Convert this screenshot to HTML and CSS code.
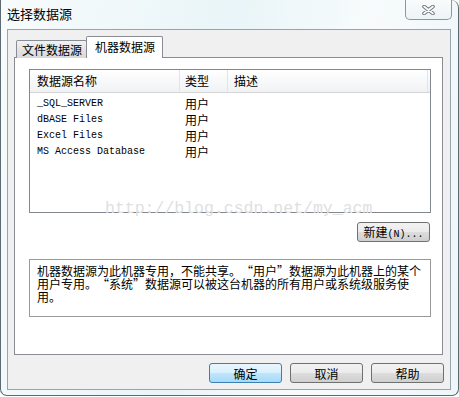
FILE: index.html
```html
<!DOCTYPE html>
<html lang="zh-CN">
    <head>
        <meta charset="UTF-8" />
        <title>选择数据源</title>
        <link rel="stylesheet" href="styles.css">
    </head>
    <body>
        <div class="window">
            <div class="titlebar">
                <span class="title">选择数据源</span>
                <button class="close" aria-label="关闭">
                    <svg width="13" height="10" viewBox="0 0 13 10">
                        <path d="M2 1.5 L11 8.5 M11 1.5 L2 8.5" stroke="#6f7a80" stroke-width="3.6" stroke-linecap="round"></path>
                        <path d="M2 1.5 L11 8.5 M11 1.5 L2 8.5" stroke="#fff" stroke-width="1.6" stroke-linecap="round"></path>
                    </svg>
                </button>
            </div>
            <div class="client">
                <div class="tabs">
                    <div class="tab">文件数据源</div>
                    <div class="tab selected">机器数据源</div>
                </div>
                <div class="panel">
                    <div class="list">
                        <div class="list-head">
                            <div class="col name">数据源名称</div>
                            <div class="col type">类型</div>
                            <div class="col desc">描述</div>
                        </div>
                        <div class="rows">
                            <div class="row"><span class="col name mono">_SQL_SERVER</span><span class="col type">用户</span></div>
                            <div class="row"><span class="col name mono">dBASE Files</span><span class="col type">用户</span></div>
                            <div class="row"><span class="col name mono">Excel Files</span><span class="col type">用户</span></div>
                            <div class="row"><span class="col name mono">MS Access Database</span><span class="col type">用户</span></div>
                        </div>
                    </div>
                    <div class="watermark">http://blog.csdn.net/my_acm</div>
                    <div class="new-row">
                        <button class="btn new">新建<span class="mono">(N)...</span></button>
                    </div>
                    <div class="note">机器数据源为此机器专用，不能共享。<span class="q-open">“</span>用户<span class="q-close">”</span>数据源为此机器上的某个用户专用。<span class="q-open">“</span>系统<span class="q-close">”</span>数据源可以被这台机器的所有用户或系统级服务使用。</div>
                </div>
                <div class="actions">
                    <button class="btn default">确定</button>
                    <button class="btn">取消</button>
                    <button class="btn">帮助</button>
                </div>
            </div>
        </div>
    </body>
</html>
```

FILE: styles.css
```css
*,
*::before,
*::after {
    box-sizing: border-box;
}

body {
    margin: 0;
    background: #fff;
    font-family: "Noto Sans CJK SC", sans-serif;
    font-size: 12px;
    color: #000;
}

.mono {
    font-family: "Liberation Mono", "Noto Sans CJK SC", monospace;
    font-size: 10px;
}

.window {
    position: relative;
    width: 459px;
    height: 396px;
    border: 1px solid #5d6a72;
    border-top: 0;
    border-radius: 0 8px 7px 7px;
    background: linear-gradient(100deg, #f7fbfc 0%, #e9f5f8 45%, #f7fbfc 70%, #eef6f9 100%);
    display: flex;
    flex-direction: column;
}

.titlebar {
    height: 29px;
    flex: none;
    display: flex;
    align-items: center;
    padding: 0 0 1px 6px;
}
.title {
    font-size: 13px;
    line-height: 16px;
}
.close {
    position: absolute;
    top: 0;
    right: 6px;
    width: 47px;
    height: 20px;
    border: 1px solid #8b979e;
    border-top: 0;
    border-radius: 0 0 5px 5px;
    background: linear-gradient(#f9fbfc, #eef3f5);
    padding: 0;
    display: flex;
    align-items: center;
    justify-content: center;
}

.client {
    flex: 1;
    margin: 0 7px 5px 6px;
    border: 1px solid #96a4ad;
    background: #f0f0f0;
    display: flex;
    flex-direction: column;
}

.tabs {
    display: flex;
    align-items: flex-end;
    margin: 6px 0 0 8px;
    height: 22px;
    position: relative;
    z-index: 1;
}
.tab {
    height: 18px;
    width: 71px;
    border: 1px solid #898c95;
    border-bottom: 0;
    border-radius: 2px 2px 0 0;
    background: linear-gradient(#f2f2f2, #e3e3e3 50%, #d9d9d9);
    padding-left: 5px;
    line-height: 17px;
}
.tab.selected {
    height: 22px;
    width: 77px;
    margin-left: -1px;
    background: #fff;
    padding-left: 8px;
    line-height: 20px;
}

.panel {
    position: relative;
    height: 298px;
    margin: -1px 7px 0 6px;
    border: 1px solid #898c95;
    background: #fff;
    padding: 11px 11px 0 14px;
}

.list {
    height: 144px;
    border: 1px solid #828790;
}
.list-head {
    display: flex;
    height: 23px;
    border-bottom: 1px solid #d5d5d5;
    background: linear-gradient(#ffffff, #f7f8f9 50%, #f1f2f4);
    line-height: 22px;
}
.list-head .col {
    border-right: 1px solid #e3e4e6;
}
.col.name {
    width: 150px;
    padding-left: 7px;
}
.col.type {
    width: 48px;
    padding-left: 5px;
}
.col.desc {
    width: 200px;
    padding-left: 6px;
}
.rows {
    padding-top: 3px;
}
.row {
    display: flex;
    height: 16px;
    line-height: 16px;
}
.row .col.name {
    font-size: 10px;
}

.watermark {
    position: absolute;
    left: 90px;
    top: 142px;
    font-family: "Liberation Mono", monospace;
    font-size: 16.5px;
    line-height: 18px;
    color: #e0e0e0;
    pointer-events: none;
}

.new-row {
    display: flex;
    justify-content: flex-end;
    margin: 9px 1px 0 0;
}

.btn {
    width: 73px;
    height: 20px;
    padding: 0;
    border: 1px solid #707070;
    border-radius: 3px;
    background: linear-gradient(#f2f2f2, #ebebeb 50%, #dddddd 51%, #cfcfcf);
    font-family: "Noto Sans CJK SC", sans-serif;
    font-size: 12px;
    line-height: 17px;
    color: #000;
}
.btn.default {
    border-color: #3c7fb1;
    background: linear-gradient(#eaf6fd, #d9f0fc 50%, #bee6fd 51%, #a7d9f5);
}

.note {
    margin-top: 17px;
    height: 58px;
    border: 1px solid #9a9a9a;
    padding: 4px 3px 0 7px;
    line-height: 13px;
}
.q-open,
.q-close {
    display: inline-block;
    width: 12px;
}
.q-open {
    text-align: right;
}
.q-close {
    text-align: left;
}

.actions {
    display: flex;
    justify-content: flex-end;
    gap: 8px;
    margin: 8px 6px 0 0;
}
```
